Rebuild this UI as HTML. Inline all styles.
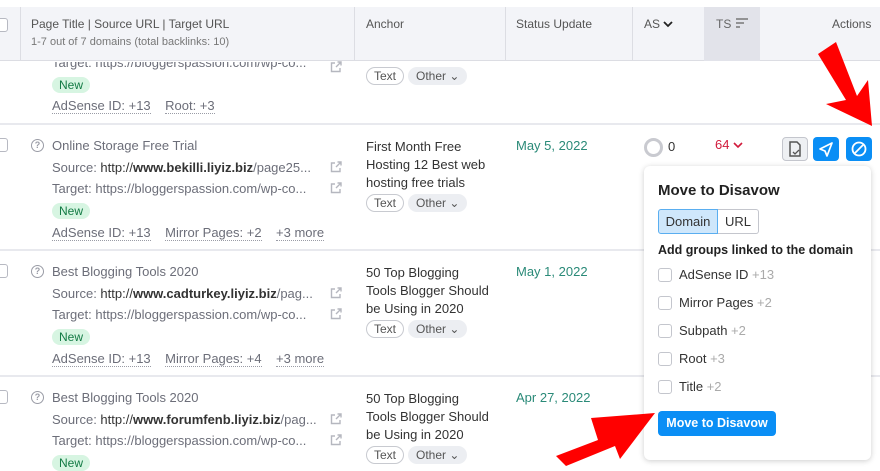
<!DOCTYPE html>
<html><head><meta charset="utf-8"><style>
*{margin:0;padding:0;box-sizing:border-box}
body{width:880px;height:471px;overflow:hidden;background:#fff;font-family:"Liberation Sans",sans-serif;font-size:13px;color:#333;position:relative}
.a{position:absolute;white-space:nowrap}
.hd{position:absolute;top:7px;left:0;width:880px;height:54px;background:#f3f4f8;border-bottom:1px solid #dcdde3}
.vl{position:absolute;top:7px;height:54px;width:1px;background:#dcdde3}
.hl{position:absolute;left:0;width:880px;height:2px;background:#e8e9ee}
.cb{position:absolute;left:-6px;width:14px;height:14px;border:1px solid #b7b9c2;border-radius:3px;background:#fff}
.g{color:#6c6e79}
.lk{color:#6c6e79;border-bottom:1px dotted #9a9ca6}
.new{background:#d7f5e2;color:#127a44;border-radius:9px;padding:1px 7px;font-size:12px}
.tag{border:1px solid #c8cad0;border-radius:9px;padding:0 7px;font-size:12px;color:#555;height:18px;line-height:16px}
.oth{background:#eceef2;border-radius:9px;padding:0 8px;font-size:12px;color:#555;height:18px;line-height:18px}
.q{width:13px;height:13px;border:1.3px solid #9a9ca6;border-radius:50%;font-size:9px;line-height:11px;text-align:center;color:#9a9ca6;font-weight:bold}
.date{color:#2a8a78}
.pop{position:absolute;left:644px;top:166px;width:227px;height:294px;background:#fff;border-radius:6px;box-shadow:0 1px 6px rgba(0,0,0,.2)}
.chk{width:14px;height:14px;border:1px solid #c4c6cd;border-radius:3px}
</style></head><body>
<svg width="0" height="0" style="position:absolute"><defs><symbol id="ex" viewBox="0 0 12 12"><path d="M5 2H1.5v8.5H10V7" fill="none" stroke="#b5b7bf" stroke-width="1.4"/><path d="M6 6l5-5M7.5 1H11v3.5" fill="none" stroke="#b5b7bf" stroke-width="1.4"/></symbol></defs></svg>
<div class="hd"></div>
<div class="vl" style="left:20px"></div><div class="vl" style="left:354px"></div><div class="vl" style="left:505px"></div><div class="vl" style="left:632px"></div>
<div class="a" style="left:704px;top:7px;width:56px;height:54px;background:#e2e3ea"></div>
<div class="cb" style="top:18px"></div>
<div class="a" style="left:31px;top:17px;font-size:12px;color:#555">Page Title | Source URL | Target URL</div>
<div class="a" style="left:31px;top:36px;font-size:11px;color:#777">1-7 out of 7 domains (total backlinks: 10)</div>
<div class="a" style="left:366px;top:17px;font-size:12px;color:#555">Anchor</div>
<div class="a" style="left:516px;top:17px;font-size:12px;color:#555">Status Update</div>
<div class="a" style="left:644px;top:17px;font-size:12px;color:#555">AS <svg width="10" height="8" viewBox="0 0 10 8"><path d="M1 2l4 4 4-4" fill="none" stroke="#222" stroke-width="1.8"/></svg></div>
<div class="a" style="left:716px;top:17px;font-size:12px;color:#666">TS <svg width="14" height="10" viewBox="0 0 14 10"><path d="M1 1h12M1 5h8M1 9h4" stroke="#777" stroke-width="1.5"/></svg></div>
<div class="a" style="left:832px;top:17px;font-size:12px;color:#555">Actions</div>

<!-- row1 partial -->
<div class="a g" style="left:52px;top:55px;clip-path:inset(7px 0 0 0)">Target: https://bloggerspassion.com/wp-co...</div>
<svg class="a" style="left:330px;top:61px" width="12" height="12"><use href="#ex"/></svg>
<div class="a new" style="left:52px;top:77px">New</div>
<div class="a" style="left:52px;top:98px"><span class="lk">AdSense ID: +13</span>&nbsp;&nbsp;&nbsp;&nbsp;<span class="lk">Root: +3</span></div>
<div class="a tag" style="left:366px;top:67px">Text</div><div class="a oth" style="left:408px;top:67px">Other &#8964;</div>
<div class="hl" style="top:123px"></div>

<div class="cb" style="top:138px"></div>
<div class="a q" style="left:31px;top:139px">?</div>
<div class="a g" style="left:52px;top:138px">Online Storage Free Trial</div>
<div class="a" style="left:52px;top:160px"><span class="g">Source: </span>http://<b>www.bekilli.liyiz.biz</b><span class="g">/page25...</span></div>
<svg class="a" style="left:330px;top:161px" width="12" height="12"><use href="#ex"/></svg>
<div class="a g" style="left:52px;top:181px">Target: https://bloggerspassion.com/wp-co...</div>
<svg class="a" style="left:330px;top:182px" width="12" height="12"><use href="#ex"/></svg>
<div class="a new" style="left:52px;top:203px">New</div>
<div class="a" style="left:52px;top:225px"><span class="lk">AdSense ID: +13</span>&nbsp;&nbsp;&nbsp;&nbsp;<span class="lk">Mirror Pages: +2</span>&nbsp;&nbsp;&nbsp;&nbsp;<span class="lk">+3 more</span></div>
<div class="a" style="left:366px;top:138px;line-height:18px">First Month Free<br>Hosting 12 Best web<br>hosting free trials</div>
<div class="a tag" style="left:366px;top:194px">Text</div><div class="a oth" style="left:408px;top:194px">Other &#8964;</div>
<div class="a date" style="left:516px;top:138px">May 5, 2022</div>
<div class="a" style="left:644px;top:138px;width:19px;height:19px;border:3px solid #c9cad0;border-radius:50%"></div>
<div class="a" style="left:668px;top:139px">0</div>
<div class="a" style="left:715px;top:137px;color:#d11a3b">64 <svg width="10" height="8" viewBox="0 0 10 8"><path d="M1 2l4 4 4-4" fill="none" stroke="#d11a3b" stroke-width="1.6"/></svg></div>
<div class="a" style="left:782px;top:137px;width:26px;height:24px;border:1px solid #c4c6cd;background:#eef0f3;border-radius:4px"><svg width="24" height="22" viewBox="0 0 24 22"><path d="M7 4h7l3 3v11H7z" fill="none" stroke="#555" stroke-width="1.5"/><path d="M10 14l2 2 4-4" fill="none" stroke="#555" stroke-width="1.3"/></svg></div>
<div class="a" style="left:813px;top:137px;width:26px;height:24px;background:#0a8ef5;border-radius:4px"><svg width="26" height="24" viewBox="0 0 26 24"><path d="M7 12l12-6-5 13-2-5z" fill="none" stroke="#fff" stroke-width="1.7" stroke-linejoin="round"/></svg></div>
<div class="a" style="left:846px;top:137px;width:26px;height:24px;background:#0a8ef5;border-radius:4px"><svg width="26" height="24" viewBox="0 0 26 24"><circle cx="13" cy="12" r="6.5" fill="none" stroke="#fff" stroke-width="1.8"/><path d="M9 16l8-8" stroke="#fff" stroke-width="1.8"/></svg></div>
<div class="hl" style="top:249px"></div>

<div class="cb" style="top:264px"></div>
<div class="a q" style="left:31px;top:265px">?</div>
<div class="a g" style="left:52px;top:264px">Best Blogging Tools 2020</div>
<div class="a" style="left:52px;top:286px"><span class="g">Source: </span>http://<b>www.cadturkey.liyiz.biz</b><span class="g">/pag...</span></div>
<svg class="a" style="left:330px;top:287px" width="12" height="12"><use href="#ex"/></svg>
<div class="a g" style="left:52px;top:307px">Target: https://bloggerspassion.com/wp-co...</div>
<svg class="a" style="left:330px;top:308px" width="12" height="12"><use href="#ex"/></svg>
<div class="a new" style="left:52px;top:329px">New</div>
<div class="a" style="left:52px;top:351px"><span class="lk">AdSense ID: +13</span>&nbsp;&nbsp;&nbsp;&nbsp;<span class="lk">Mirror Pages: +4</span>&nbsp;&nbsp;&nbsp;&nbsp;<span class="lk">+3 more</span></div>
<div class="a" style="left:366px;top:264px;line-height:18px">50 Top Blogging<br>Tools Blogger Should<br>be Using in 2020</div>
<div class="a tag" style="left:366px;top:320px">Text</div><div class="a oth" style="left:408px;top:320px">Other &#8964;</div>
<div class="a date" style="left:516px;top:264px">May 1, 2022</div>
<div class="hl" style="top:375px"></div>

<div class="cb" style="top:390px"></div>
<div class="a q" style="left:31px;top:391px">?</div>
<div class="a g" style="left:52px;top:390px">Best Blogging Tools 2020</div>
<div class="a" style="left:52px;top:412px"><span class="g">Source: </span>http://<b>www.forumfenb.liyiz.biz</b><span class="g">/pag...</span></div>
<svg class="a" style="left:330px;top:413px" width="12" height="12"><use href="#ex"/></svg>
<div class="a g" style="left:52px;top:433px">Target: https://bloggerspassion.com/wp-co...</div>
<svg class="a" style="left:330px;top:434px" width="12" height="12"><use href="#ex"/></svg>
<div class="a new" style="left:52px;top:455px">New</div>
<div class="a" style="left:366px;top:390px;line-height:18px">50 Top Blogging<br>Tools Blogger Should<br>be Using in 2020</div>
<div class="a tag" style="left:366px;top:446px">Text</div><div class="a oth" style="left:408px;top:446px">Other &#8964;</div>
<div class="a date" style="left:516px;top:390px">Apr 27, 2022</div>

<div class="pop">
<div class="a" style="left:14px;top:16px;font-size:15px;font-weight:bold;color:#222">Move to Disavow</div>
<div class="a" style="left:14px;top:43px;width:60px;height:25px;background:#cfe7fb;border:1px solid #5aaef0;border-radius:3px 0 0 3px;text-align:center;line-height:23px;color:#333">Domain</div>
<div class="a" style="left:74px;top:43px;width:41px;height:25px;border:1px solid #c4c6cd;border-left:none;border-radius:0 3px 3px 0;text-align:center;line-height:23px;color:#333">URL</div>
<div class="a" style="left:14px;top:77px;font-weight:bold;color:#222;font-size:12.5px">Add groups linked to the domain</div>
<div class="a chk" style="left:14px;top:102px"></div><div class="a" style="left:35px;top:101px">AdSense ID <span style="color:#aaa">+13</span></div>
<div class="a chk" style="left:14px;top:130px"></div><div class="a" style="left:35px;top:129px">Mirror Pages <span style="color:#aaa">+2</span></div>
<div class="a chk" style="left:14px;top:158px"></div><div class="a" style="left:35px;top:157px">Subpath <span style="color:#aaa">+2</span></div>
<div class="a chk" style="left:14px;top:186px"></div><div class="a" style="left:35px;top:185px">Root <span style="color:#aaa">+3</span></div>
<div class="a chk" style="left:14px;top:214px"></div><div class="a" style="left:35px;top:213px">Title <span style="color:#aaa">+2</span></div>
<div class="a" style="left:14px;top:245px;width:118px;height:25px;background:#0a8ef5;border-radius:4px;color:#fff;text-align:center;line-height:25px;font-weight:bold;font-size:12.5px">Move to Disavow</div>
</div>

<svg class="a" style="left:0;top:0" width="880" height="471">
<polygon points="818,54 836,42 857,96 868,80 872,126 826,104 846,100" fill="#f00"/>
<polygon points="556,456 598,440 591,418 655,413 620,459 615,446 566,466" fill="#f00"/>
</svg>
</body></html>
